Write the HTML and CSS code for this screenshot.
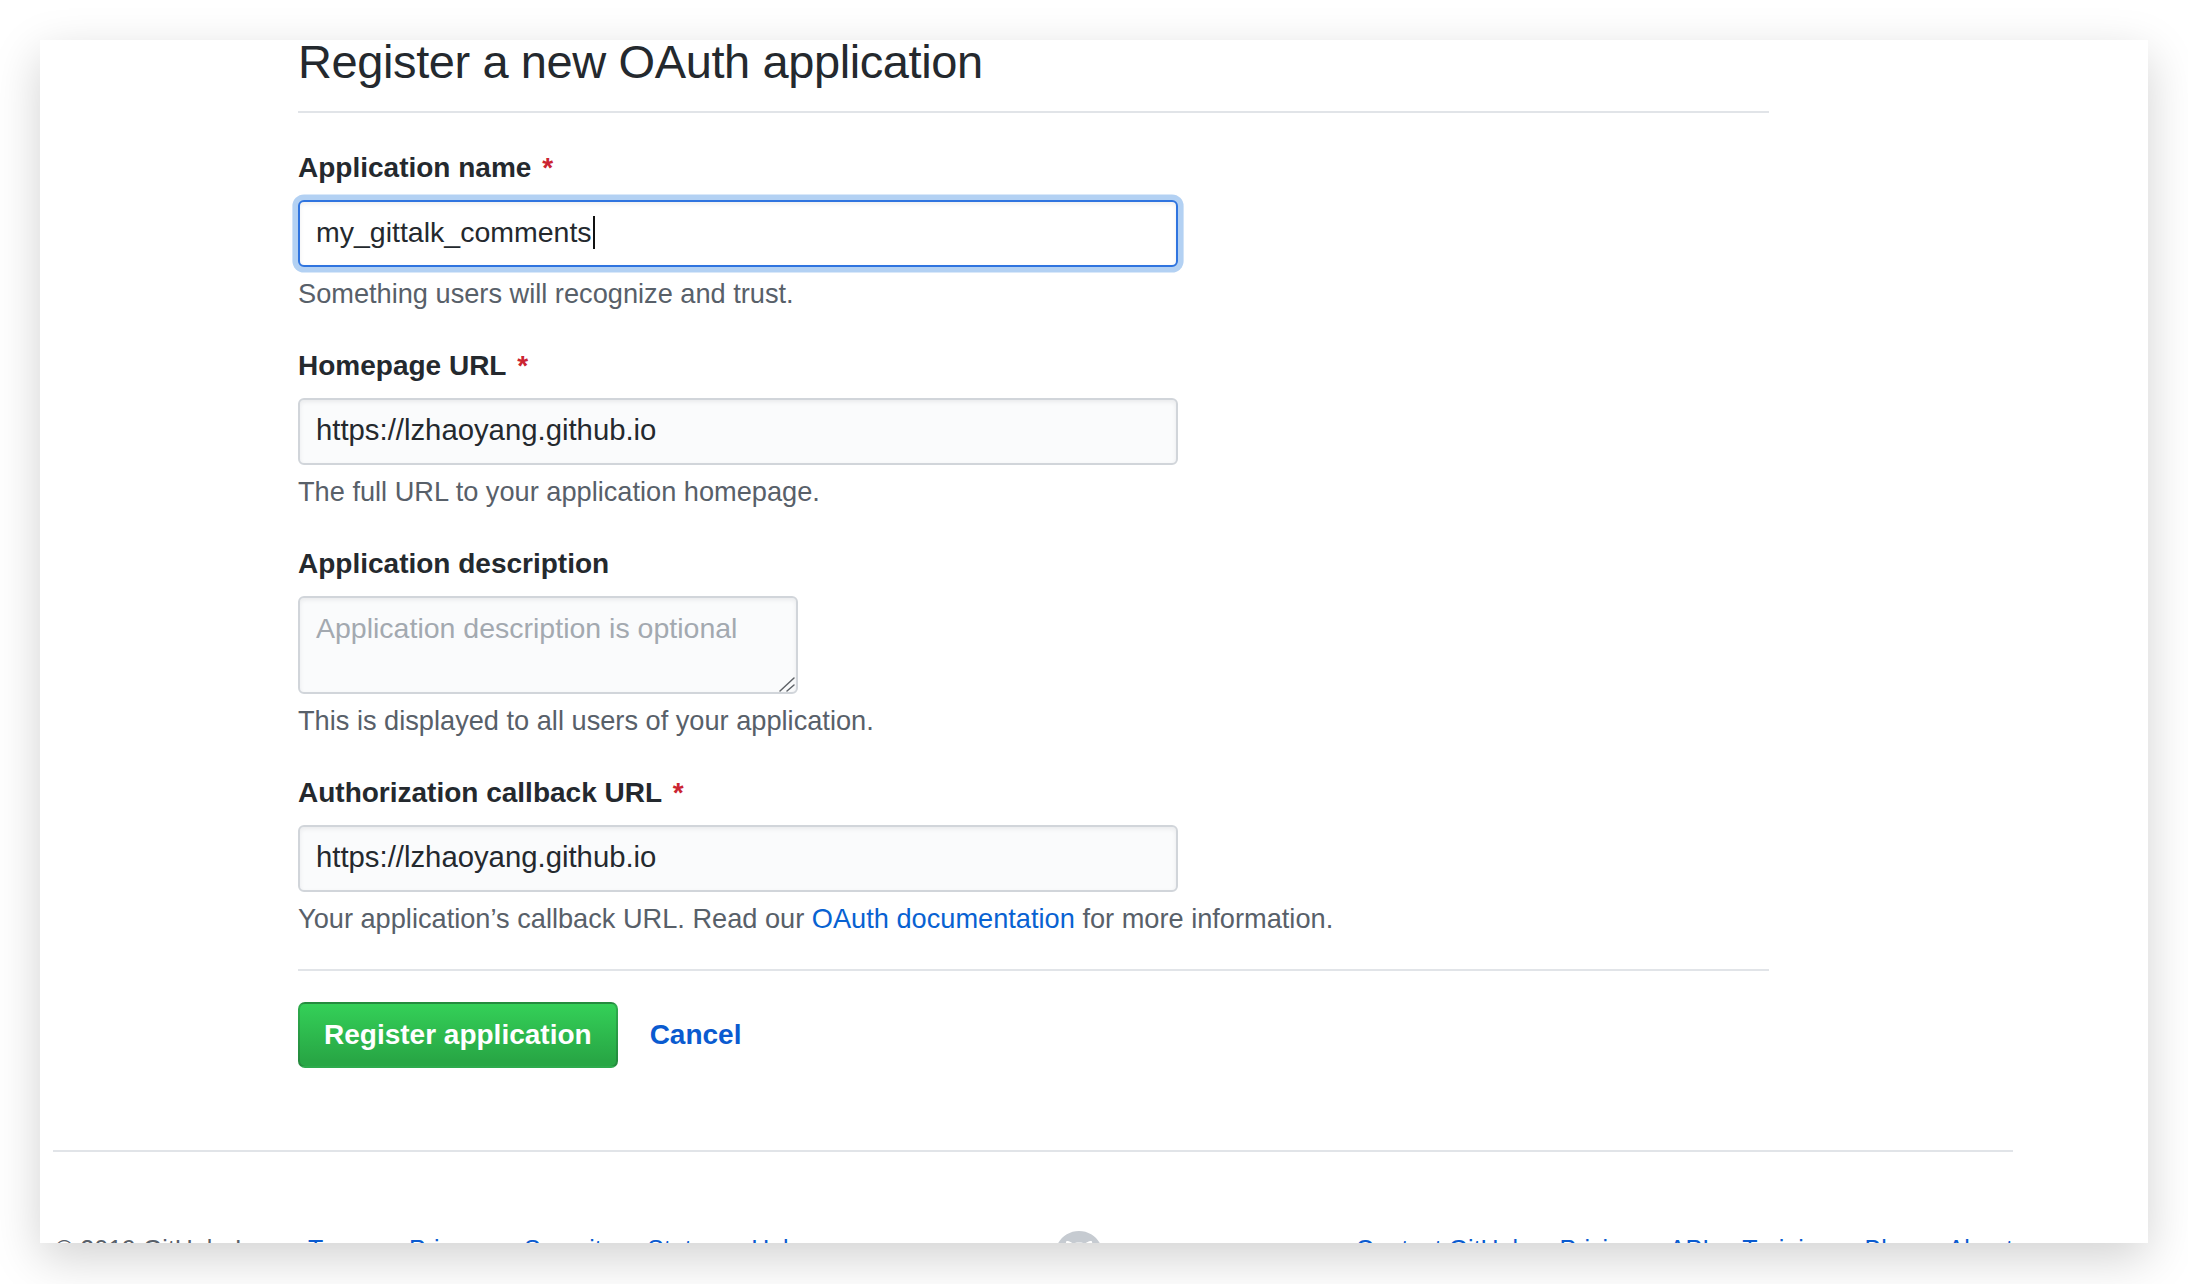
FILE: index.html
```html
<!DOCTYPE html>
<html lang="en">
<head>
<meta charset="utf-8">
<title>Register a new OAuth application</title>
<link rel="stylesheet" href="styles.css">
</head>
<body>
<div class="desk">
  <div class="window">
    <main class="main">
      <div class="subhead">
        <h2 class="subhead-heading">Register a new OAuth application</h2>
      </div>
      <form class="app-form">
        <dl class="form-group">
          <dt><label>Application name<span class="req"> *</span></label></dt>
          <dd>
            <div class="form-control focused" role="textbox"><span class="value">my_gittalk_comments</span><span class="caret"></span></div>
            <p class="note">Something users will recognize and trust.</p>
          </dd>
        </dl>
        <dl class="form-group">
          <dt><label for="homepage">Homepage URL<span class="req"> *</span></label></dt>
          <dd>
            <input id="homepage" class="form-control" type="text" value="https://lzhaoyang.github.io">
            <p class="note">The full URL to your application homepage.</p>
          </dd>
        </dl>
        <dl class="form-group">
          <dt><label for="desc">Application description</label></dt>
          <dd>
            <div class="textarea-wrap">
              <textarea id="desc" class="form-control textarea" placeholder="Application description is optional"></textarea>
              <svg class="resize-handle" width="20" height="20" viewBox="0 0 20 20" aria-hidden="true">
                <path d="M17 5 L3 18 M17 12 L10 18" stroke="#5f6368" stroke-width="1.5" fill="none" stroke-linecap="round"/>
              </svg>
            </div>
            <p class="note">This is displayed to all users of your application.</p>
          </dd>
        </dl>
        <dl class="form-group last">
          <dt><label for="callback">Authorization callback URL<span class="req"> *</span></label></dt>
          <dd>
            <input id="callback" class="form-control" type="text" value="https://lzhaoyang.github.io">
            <p class="note">Your application’s callback URL. Read our <a href="#" class="link">OAuth documentation</a> for more information.</p>
          </dd>
        </dl>
        <div class="form-actions">
          <button type="button" class="btn-primary">Register application</button>
          <a href="#" class="btn-link">Cancel</a>
        </div>
      </form>
    </main>
    <footer class="footer">
      <ul class="footer-links">
        <li class="muted">© 2019 GitHub, Inc.</li>
        <li><a href="#">Terms</a></li>
        <li><a href="#">Privacy</a></li>
        <li><a href="#">Security</a></li>
        <li><a href="#">Status</a></li>
        <li><a href="#">Help</a></li>
      </ul>
      <a href="#" class="footer-logo" aria-label="GitHub">
        <svg width="48" height="48" viewBox="0 0 16 16" aria-hidden="true">
          <path fill="#c6cbd1" fill-rule="evenodd" d="M8 0C3.58 0 0 3.58 0 8c0 3.54 2.29 6.53 5.47 7.59.4.07.55-.17.55-.38 0-.19-.01-.82-.01-1.49-2.01.37-2.53-.49-2.69-.94-.09-.23-.48-.94-.82-1.13-.28-.15-.68-.52-.01-.53.63-.01 1.08.58 1.23.82.72 1.21 1.87.87 2.33.66.07-.52.28-.87.51-1.06-1.78-.2-3.64-.89-3.64-3.95 0-.87.31-1.59.82-2.15-.08-.2-.36-1.02.08-2.12 0 0 .67-.21 2.2.82.64-.18 1.32-.27 2-.27.68 0 1.36.09 2 .27 1.53-1.04 2.2-.82 2.2-.82.44 1.1.16 1.92.08 2.12.51.56.82 1.27.82 2.15 0 3.07-1.87 3.75-3.65 3.95.29.25.54.73.54 1.48 0 1.07-.01 1.93-.01 2.2 0 .21.15.46.55.38A8.013 8.013 0 0 0 16 8c0-4.42-3.58-8-8-8z"/>
        </svg>
      </a>
      <ul class="footer-links">
        <li><a href="#">Contact GitHub</a></li>
        <li><a href="#">Pricing</a></li>
        <li><a href="#">API</a></li>
        <li><a href="#">Training</a></li>
        <li><a href="#">Blog</a></li>
        <li><a href="#">About</a></li>
      </ul>
    </footer>
  </div>
</div>
</body>
</html>
```

FILE: styles.css
```css
html, body {
  margin: 0;
  padding: 0;
  height: 1284px;
  overflow: hidden;
  background: #ffffff;
}

body {
  font-family: "Liberation Sans", Arial, sans-serif;
  color: #24292e;
}

.desk {
  padding: 40px 40px 0 40px;
}

.window {
  width: 2108px;
  height: 1203px;
  background: #ffffff;
  overflow: hidden;
  box-shadow: 0 15px 45px rgba(0, 0, 0, 0.18);
}

.main {
  width: 1471px;
  margin-left: 258px;
}

.subhead {
  padding-bottom: 27px;
  border-bottom: 2px solid #e1e4e8;
  margin-bottom: 34px;
}

.subhead-heading {
  margin: 0;
  font-size: 47px;
  line-height: 44px;
  font-weight: 400;
  letter-spacing: -0.4px;
  color: #24292e;
}

.app-form {
  margin: 0;
}

.form-group {
  margin: 0 0 33px 0;
}

.form-group.last {
  margin-bottom: 0;
}

.form-group dt {
  margin: 0 0 11px 0;
  font-size: 28px;
  line-height: 42px;
  font-weight: 700;
  color: #24292e;
}

.form-group dd {
  margin: 0;
}

.req {
  padding-left: 3px;
  color: #cb2431;
}

.form-control {
  box-sizing: border-box;
  display: block;
  width: 880px;
  height: 67px;
  margin: 0;
  padding: 0 16px 3px 16px;
  font-family: "Liberation Sans", Arial, sans-serif;
  font-size: 28.5px;
  color: #24292e;
  background: #fafbfc;
  border: 2px solid #d1d5da;
  border-radius: 6px;
  box-shadow: inset 0 2px 4px rgba(27, 31, 35, 0.075);
  outline: none;
}

#homepage, #callback {
  font-size: 29.3px;
}

.form-control.focused {
  display: flex;
  align-items: center;
  background: #ffffff;
  border-color: #2f74df;
  box-shadow: inset 0 2px 4px rgba(27, 31, 35, 0.075), 0 0 0 5.6px rgba(3, 102, 214, 0.3);
}

.form-control .value {
  line-height: 40px;
  white-space: pre;
}

.caret {
  display: block;
  width: 2px;
  height: 33px;
  margin-left: 1px;
  background: #111111;
}

.textarea-wrap {
  position: relative;
  width: 500px;
}

.form-control.textarea {
  width: 500px;
  height: 98px;
  padding: 10px 16px;
  line-height: 40px;
  resize: none;
  overflow: hidden;
}

.form-control.textarea::placeholder {
  color: #a3a9b0;
  opacity: 1;
}

.resize-handle {
  position: absolute;
  right: 1px;
  bottom: 1px;
}

.note {
  margin: 9px 0 0 0;
  font-size: 27.2px;
  line-height: 36px;
  color: #586069;
}

.link {
  color: #0862d2;
  text-decoration: none;
}

.form-actions {
  display: flex;
  align-items: center;
  margin-top: 32px;
  padding-top: 31px;
  border-top: 2px solid #e1e4e8;
}

.btn-primary {
  box-sizing: border-box;
  height: 66px;
  padding: 0 24px;
  font-family: "Liberation Sans", Arial, sans-serif;
  font-size: 28px;
  font-weight: 700;
  color: #ffffff;
  background: linear-gradient(180deg, #34d058 0%, #28a745 90%);
  border: 2px solid rgba(27, 31, 35, 0.2);
  border-radius: 7px;
  cursor: pointer;
}

.btn-link {
  margin-left: 32px;
  font-size: 28px;
  font-weight: 700;
  color: #0a5bd0;
  text-decoration: none;
}

.footer {
  display: flex;
  justify-content: space-between;
  align-items: flex-start;
  width: 1960px;
  margin: 82px 0 0 13px;
  padding-top: 79px;
  border-top: 2px solid #e1e4e8;
}

.footer-links {
  display: flex;
  gap: 33px;
  margin: 0;
  padding: 0 0 0 2px;
  list-style: none;
  font-size: 25px;
  line-height: 36px;
}

.footer-links:last-child {
  padding: 0;
}

.footer-links a {
  color: #0a5bd0;
  text-decoration: none;
}

.footer-links .muted {
  color: #586069;
}

.footer-logo {
  display: block;
  width: 48px;
  height: 48px;
}

.footer-logo svg {
  display: block;
}
```
